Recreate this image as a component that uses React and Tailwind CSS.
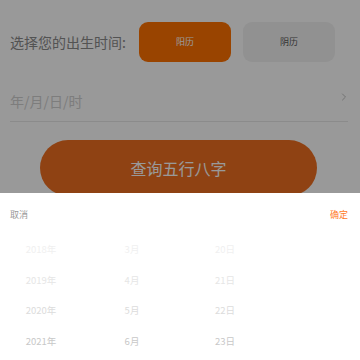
import { ChevronRight } from "lucide-react";

const years = ["2018年", "2019年", "2020年", "2021年"];
const months = ["3月", "4月", "5月", "6月"];
const days = ["20日", "21日", "22日", "23日"];
const shades = ["text-[#f0f0f0]", "text-[#e6e6e6]", "text-[#dcdcdc]", "text-[#c8c8c8]"];

function Column({ items, width }) {
  return (
    <div className={`flex flex-col items-center ${width}`}>
      {items.map((t, i) => (
        <div key={t} className={`h-[30.5px] flex items-center text-[9.5px] ${shades[i]}`}>
          {t}
        </div>
      ))}
    </div>
  );
}

export default function App() {
  return (
    <div
      className="relative w-[360px] h-[360px] overflow-hidden bg-white"
      style={{ fontFamily: '"Noto Sans CJK SC", "Noto Sans", sans-serif' }}
    >
      {/* page */}
      <div className="px-[10px]">
        <div className="flex items-center pt-[22px]">
          <span className="text-[14px] text-[#8a8a8a] w-[129px] whitespace-nowrap">选择您的出生时间:</span>
          <button className="w-[92px] h-[40px] rounded-[9px] bg-[#ff7200] text-white text-[9px]">阳历</button>
          <button className="ml-[12px] w-[92px] h-[40px] rounded-[9px] bg-[#f2f2f2] text-[#5a5a5a] text-[9px]">阴历</button>
        </div>
        <div className="mt-[20px] flex items-center justify-between h-[40px] border-b border-[#e8e8e8] mr-[2px]">
          <span className="text-[14px] text-[#d0d0d0]">年/月/日/时</span>
          <ChevronRight size={12} className="text-[#c0c0c0] -mt-[10px] -mr-[2px]" strokeWidth={2} />
        </div>
        <div className="pl-[30px] pr-[33px] pt-[18px]">
          <button className="w-full h-[56px] rounded-full bg-[#ee6f21] text-white text-[16px]">查询五行八字</button>
        </div>
      </div>

      {/* mask */}
      <div className="absolute inset-0 bg-black/40" />

      {/* bottom sheet */}
      <div className="absolute left-0 right-0 bottom-0 h-[167px] bg-white">
        <div className="flex items-center justify-between pl-[10px] pr-[12px] h-[44px]">
          <span className="text-[9px] text-[#999]">取消</span>
          <span className="text-[9px] text-[#ff7a1f]">确定</span>
        </div>
        <div className="flex -mt-[3px]">
          <Column items={years} width="w-[82px]" />
          <Column items={months} width="w-[100px]" />
          <Column items={days} width="w-[86px]" />
        </div>
      </div>
    </div>
  );
}
